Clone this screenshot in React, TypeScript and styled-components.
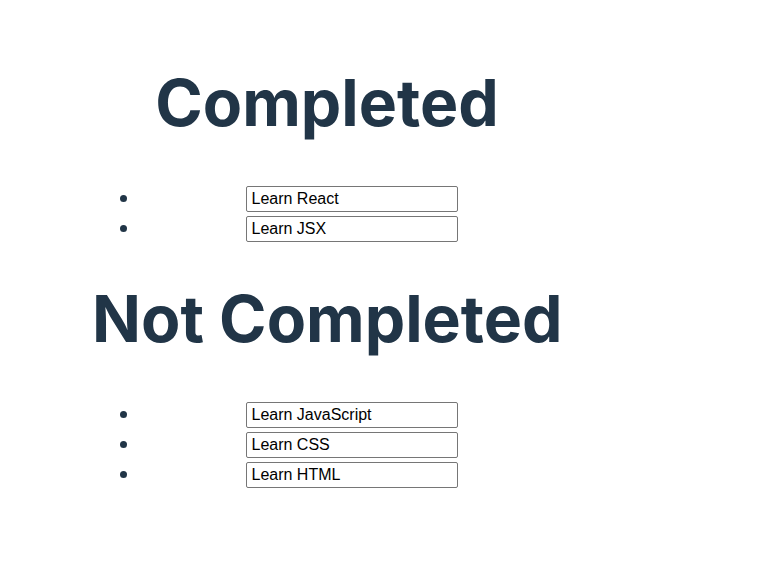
import React from "react";
import styled, { createGlobalStyle } from "styled-components";

const GlobalStyle = createGlobalStyle`
  html, body {
    margin: 0;
    padding: 0;
    background: #ffffff;
  }
  body {
    font-family: Inter, "Liberation Sans", sans-serif;
    color: #213547;
  }
`;

const Page = styled.main`
  padding: 68px 0 0 92px;
`;

const Board = styled.div`
  width: 470px;
  text-align: center;
`;

const Section = styled.section`
  & + & {
    margin-top: 39px;
  }
`;

const Title = styled.h1`
  margin: 0;
  font-family: Inter, "Liberation Sans", sans-serif;
  font-weight: 700;
  font-size: 64.25px;
  line-height: 70px;
  color: #213547;
  white-space: nowrap;
`;

const List = styled.ul`
  margin: 47px 0 0 0;
  padding: 0 0 0 48px;
  list-style: disc outside;
`;

const Item = styled.li`
  height: 30px;
  font-size: 16px;
  color: #213547;
  text-align: center;
  line-height: 26px;

  &::marker {
    font-size: 21px;
  }
`;

const TodoInput = styled.input`
  box-sizing: border-box;
  width: 212px;
  height: 26px;
  margin: 0 0 0 1px;
  padding: 0 4px 0 5px;
  border: 1px solid #767676;
  border-radius: 2px;
  font-family: "Liberation Sans", Arial, sans-serif;
  font-size: 16px;
  color: #000000;
  background: #ffffff;
  vertical-align: top;
  outline: none;
`;

type Todo = { id: number; text: string; done: boolean };

const todos: Todo[] = [
  { id: 1, text: "Learn React", done: true },
  { id: 2, text: "Learn JSX", done: true },
  { id: 3, text: "Learn JavaScript", done: false },
  { id: 4, text: "Learn CSS", done: false },
  { id: 5, text: "Learn HTML", done: false },
];

function TodoSection({ title, items }: { title: string; items: Todo[] }) {
  return (
    <Section>
      <Title>{title}</Title>
      <List>
        {items.map((t) => (
          <Item key={t.id}>
            <TodoInput type="text" defaultValue={t.text} />
          </Item>
        ))}
      </List>
    </Section>
  );
}

export default function App() {
  return (
    <>
      <GlobalStyle />
      <Page>
        <Board>
          <TodoSection title="Completed" items={todos.filter((t) => t.done)} />
          <TodoSection title="Not Completed" items={todos.filter((t) => !t.done)} />
        </Board>
      </Page>
    </>
  );
}
